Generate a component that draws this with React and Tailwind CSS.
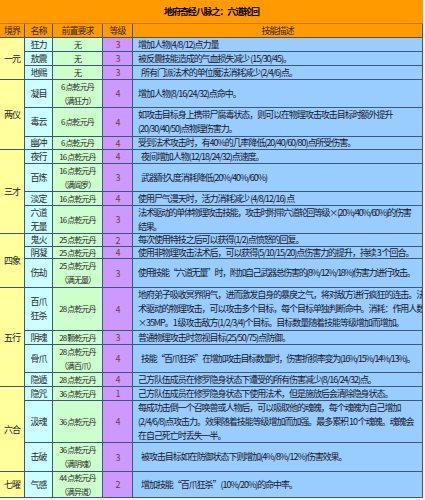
import React from "react";

const SPAN = { 1: "row-span-1", 3: "row-span-3", 4: "row-span-4" };

const rows = [
  { g: "一元", span: 3, n: ["狂力"], p: ["无"], l: 3, d: ["增加人物(4/8/12)点力量"] },
  { n: ["敖震"], p: ["无"], l: 3, d: ["被反震技能造成的气血损失减少 (15/30/45)。"] },
  { n: ["地赐"], p: ["无"], l: 3, d: ["所有门派法术的单位魔法消耗减少(2/4/6)点。"], ind: true },
  { g: "两仪", span: 3, n: ["凝目"], p: ["6 点乾元丹", "（满狂力）"], l: 4, d: ["增加人物(8/16/24/32)点命中。"] },
  { n: ["毒云"], p: ["6 点乾元丹"], l: 4, d: ["如攻击目标身上携带尸腐毒状态，则可以在物理攻击攻击目标时额外提升", "(20/30/40/50)点物理伤害力。"] },
  { n: ["幽冲"], p: ["6 点乾元丹"], l: 4, d: ["受到法术攻击时，有40%的几率降低(20/40/60/80)点所受伤害。"] },
  { g: "三才", span: 4, n: ["夜行"], p: ["16 点乾元丹"], l: 4, d: ["夜间增加人物(12/18/24/32)点速度。"], ind: true },
  { n: ["百炼"], p: ["16 点乾元丹", "（满阎罗）"], l: 3, d: ["武器耐久度消耗降低(20%/40%/60%)"], ind: true },
  { n: ["淡定"], p: ["16 点乾元丹"], l: 4, d: ["使用尸气漫天时，活力消耗减少 (4/8/12/16) 点"] },
  { n: ["六道", "无量"], p: ["16 点乾元丹"], l: 3, tight: true, d: ["法术驱动的单体物理攻击技能，攻击时附带六道轮回等级×(20%/40%/60%)的伤害", "结果。"] },
  { g: "四象", span: 3, n: ["鬼火"], p: ["25 点乾元丹"], l: 2, d: ["每次使用特技之后可以获得(1/2)点愤怒的回复。"] },
  { n: ["阴凝"], p: ["25 点乾元丹"], l: 4, d: ["使用非物理攻击法术后，可以获得(5/10/15/20)点伤害力的提升，持续 3 个回合。"] },
  { n: ["伤劫"], p: ["25 点乾元丹", "（满无量）"], l: 3, tight: true, d: ["使用技能“六道无量”时，附加自己武器总伤害的(8%/12%/18%)伤害力进行攻击。"] },
  { g: "五行", span: 4, n: ["百爪", "狂杀"], p: ["28 点乾元丹"], l: 4, d: ["地府弟子吸收冥界阴气，进而激发自身的暴戾之气，将对敌方进行疯狂的连击。法", "术驱动的物理攻击，可以攻击多个目标，每个目标单独判断命中。消耗：作用人数", "×35MP。1 级攻击敌方(1/2/3/4)个目标。目标数量随着技能等级增加而增加。"] },
  { n: ["阴魂"], p: ["28 颗乾元丹"], l: 3, d: ["普通物理攻击时忽视目标(25/50/75)点防御。"] },
  { n: ["骨爪"], p: ["28 点乾元丹", "（满百爪）"], l: 4, tight: true, d: ["技能“百爪狂杀”在增加攻击目标数量时，伤害折损率变为(16%/15%/14%/13%)。"], ind: true },
  { n: ["隐遁"], p: ["28 点乾元丹"], l: 4, d: ["己方队伍成员在修罗隐身状态下遭受的所有伤害减少(8/16/24/32)点。"] },
  { g: "六合", span: 3, n: ["隐咒"], p: ["36 点乾元丹"], l: 1, d: ["己方队伍成员在修罗隐身状态下使用法术，但是施放后会清除隐身状态。"] },
  { n: ["汲魂"], p: ["36 点乾元丹"], l: 4, d: ["每成功击倒一个召唤兽或人物后，可以吸取他的魂魄，每个魂魄为自己增加", "(2/4/6/8)点攻击力。效果随着技能等级增加而加强。最多累积 10 个魂魄。魂魄会", "在自己死亡时丢失一半。"] },
  { n: ["击破"], p: ["36 点乾元丹", "（满阴魂）"], l: 3, d: ["被攻击目标如在防御状态下则增加(4%/8%/12%)伤害效果。"], ind: true },
  { g: "七曜", span: 1, n: ["气感"], p: ["44 点乾元丹", "（满异道）"], l: 2, d: ["增加技能“百爪狂杀”(10%/20%)的命中率。"], ind: true },
];

const cell = "border-b border-r border-[#3d5874] flex flex-col justify-center leading-[13px] whitespace-nowrap overflow-hidden";

export default function App() {
  return (
    <div
      className="w-[425px] h-[500px] bg-[#f4f4f4] text-[9px] tracking-[-1.05px] text-[#16161f]"
      style={{ fontFamily: '"Noto Sans CJK SC", "Liberation Sans", sans-serif' }}
    >
      <div className="w-[423px] h-[24px] bg-[#ff9a00] border-b border-[#c87400] flex items-center justify-center font-bold text-black tracking-[-1.1px]">
        地府奇经八脉之：六道轮回
      </div>
      <div className="w-[423px] grid grid-cols-[25px_28px_50px_30px_1fr] grid-rows-[14px_14px_14px_14px_28px_29px_13px_14px_28px_14px_28px_13px_12px_29px_43px_14px_28px_14px_14px_42px_29px_26px]">
        {["境界", "名称", "前置要求", "等级", "技能描述"].map((h) => (
          <div key={h} className={`${cell} items-center bg-[#ff9a00] text-[#3a2600]`}>
            {h}
          </div>
        ))}
        {rows.map((r, i) => (
          <React.Fragment key={i}>
            {r.g && (
              <div className={`${cell} ${SPAN[r.span]} items-center bg-[#ffff9c] text-[#222]`}>{r.g}</div>
            )}
            <div className={`${cell} items-center bg-[#ccffff] text-[#2a2a2a]`}>
              {r.n.map((t) => (
                <span key={t} className="leading-[14px]">{t}</span>
              ))}
            </div>
            <div className={`${cell} items-center bg-[#ccffcc] text-[#2a2a2a] text-[8px] tracking-[-0.9px]`}>
              {r.p.map((t) => (
                <span key={t} className="leading-[14px]">{t}</span>
              ))}
            </div>
            <div className={`${cell} items-center bg-[#cc99ff] text-[#7a3a3a]`}>{r.l}</div>
            <div
              className={`${cell} items-start bg-[#99ccff] ${r.ind ? "pl-[8px]" : "pl-[5px]"} ${
                r.tight ? "tracking-[-1.35px]" : ""
              }`}
            >
              {r.d.map((t) => (
                <span key={t} className="leading-[14px]">{t}</span>
              ))}
            </div>
          </React.Fragment>
        ))}
      </div>
    </div>
  );
}
